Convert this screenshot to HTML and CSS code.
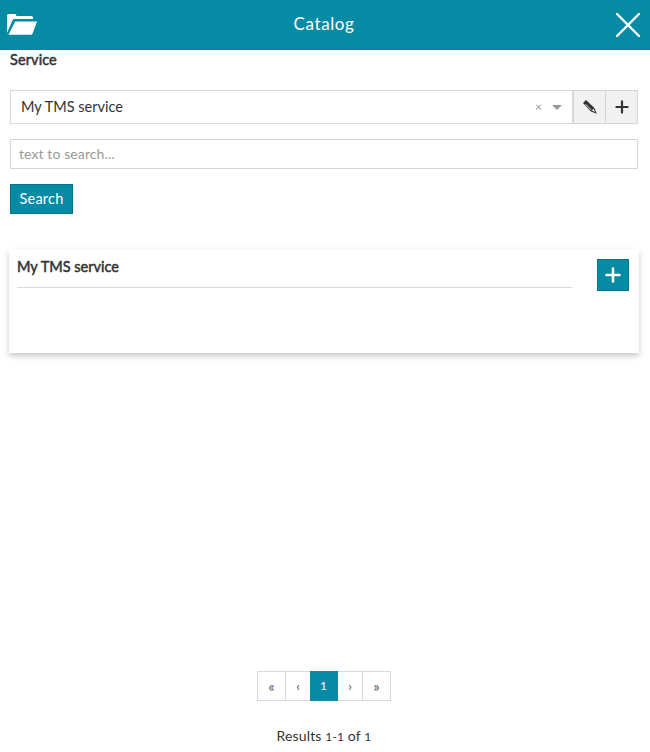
FILE: index.html
```html
<!DOCTYPE html>
<html lang="en">
<head>
<meta charset="utf-8">
<title>Catalog</title>
<link rel="stylesheet" href="styles.css">
</head>
<body>
<div class="panel">
  <header class="header">
    <svg class="folder" width="30" height="21" viewBox="0 0 30 21"><path fill="#fff" d="M0 19V1.5Q0 0 1.5 0H8Q9 0 9.2 1V2H24.5Q26 2 26 3.5V5H7.5Q6 5 5.4 6.4ZM8.2 7.5H30L25.6 19.5Q25.1 20.8 23.8 20.8H1.5Z"/></svg>
    <h1 class="title">Catalog</h1>
    <svg class="close" width="26" height="26" viewBox="0 0 26 26"><path d="M2 2 24 24M24 2 2 24" stroke="#fff" stroke-width="2.4" stroke-linecap="round"/></svg>
  </header>
  <main class="content">
    <div class="label"><span class="t-service">Service</span></div>
    <div class="service-row">
      <div class="select">
        <span class="value">My TMS service</span>
        <span class="clear">×</span>
        <span class="caret"></span>
      </div>
      <button class="tool edit"><svg width="16" height="16" viewBox="0 0 16 16"><path fill="#333" d="M1 4 4 1 12.4 9 14.8 14.8 9 12.4Z"/><path d="M3.6 5.2 9.2 10.8" stroke="#f1f1f1" stroke-width=".9"/><path d="M9.8 11.6 11.6 9.8 13 12.9Z" fill="#f1f1f1"/></svg></button>
      <button class="tool plus"><svg width="14" height="14" viewBox="0 0 14 14"><path d="M7 1.4V12.6M1.4 7H12.6" stroke="#333" stroke-width="2.2" stroke-linecap="round"/></svg></button>
    </div>
    <input class="search-input" placeholder="text to search...">
    <button class="search-button"><span class="t-search">Search</span></button>
    <section class="card">
      <div class="card-title"><span class="t-card">My TMS service</span></div>
      <button class="add"><svg width="16" height="16" viewBox="0 0 16 16"><path d="M8 1.5V14.5M1.5 8H14.5" stroke="#fff" stroke-width="2.5" stroke-linecap="round"/></svg></button>
    </section>
  </main>
  <footer class="footer">
    <nav class="pages"><a class="page wide">«</a><a class="page">‹</a><a class="page active">1</a><a class="page">›</a><a class="page wide">»</a></nav>
    <div class="results"><span>Results <span class="num">1-1</span> of <span class="num">1</span></span></div>
  </footer>
</div>
</body>
</html>
```
FILE: styles.css
```css
* { box-sizing: border-box; }
body {
  margin: 0;
  background: #fff;
  color: #333;
  font: 14px/20px Lato, "Open Sans", sans-serif;
}
button { font: inherit; margin: 0; border-radius: 0; }
svg { display: block; fill: none; }
.panel { height: 752px; display: flex; flex-direction: column; }
.header {
  height: 50px;
  flex: none;
  display: flex;
  align-items: center;
  justify-content: space-between;
  padding: 0 9px 1px 7px;
  background: #078aa3;
}
.title {
  margin: -1px 0 0 -4px;
  color: #fff;
  font-size: 17px;
  font-weight: 400;
  letter-spacing: .6px;
}
.content { flex: 1; padding: 0 12px 0 10px; }
.label { height: 40px; line-height: 19px; }
.t-service, .t-card {
  font-size: 14.5px;
  -webkit-text-stroke: .5px #333;
}
.t-service { letter-spacing: .1px; }
.service-row { display: flex; height: 34px; }
.select {
  flex: 1;
  display: flex;
  align-items: center;
  padding: 0 10px;
  border: 1px solid #d9d9d9;
}
.value { flex: 1; font-size: 14.5px; letter-spacing: 0; }
.clear { color: #999; font-size: 12px; margin-right: 10px; }
.caret {
  border: 5px solid transparent;
  border-top-color: #999;
  border-bottom: 0;
}
.tool {
  width: 33px;
  display: flex;
  align-items: center;
  justify-content: center;
  padding: 0;
  background: #f1f1f1;
  border: 1px solid #d6d6d6;
  border-left: 0;
}
.edit { border-left: 1px solid #d6d6d6; }
.plus { width: 32px; }
.search-input {
  display: block;
  width: 100%;
  height: 30px;
  margin: 15px 0;
  padding: 0 8px 2px;
  border: 1px solid #d4d4d4;
  border-radius: 0;
  outline: 0;
  font: inherit;
  letter-spacing: .1px;
}
.search-input::placeholder { color: #999; opacity: 1; }
.search-button {
  display: block;
  width: 63px;
  height: 30px;
  padding: 0;
  color: #fff;
  background: #078aa3;
  border: 1px solid #067589;
}
.t-search { font-size: 14.5px; letter-spacing: .2px; }
.card {
  display: flex;
  justify-content: space-between;
  align-items: flex-start;
  height: 104px;
  margin: 35px -1px 0;
  padding: 8px 10px 0 8px;
  box-shadow: 0 3px 6px rgba(0, 0, 0, .22);
}
.card-title {
  width: 555px;
  height: 31px;
  border-bottom: 1px solid #d9d9d9;
}
.add {
  display: flex;
  align-items: center;
  justify-content: center;
  width: 32px;
  height: 32px;
  margin-top: 2px;
  padding: 0;
  background: #078aa3;
  border: 1px solid #067589;
}
.footer { flex: none; height: 81px; padding-right: 2px; }
.pages { display: flex; justify-content: center; height: 30px; }
.page {
  width: 25px;
  border: 1px solid #d9d9d9;
  border-left: 0;
  text-align: center;
  color: #555;
  font-size: 13px;
  line-height: 28px;
}
.wide { width: 28px; font-size: 15px; }
.wide:first-child { width: 29px; border-left: 1px solid #d9d9d9; }
.active {
  width: 28px;
  margin-left: -1px;
  color: #fff;
  background: #078aa3;
  border-color: #078aa3;
  font-size: 12px;
}
.results { margin-top: 25px; text-align: center; letter-spacing: .15px; }
.num { font-size: 12px; }
```
